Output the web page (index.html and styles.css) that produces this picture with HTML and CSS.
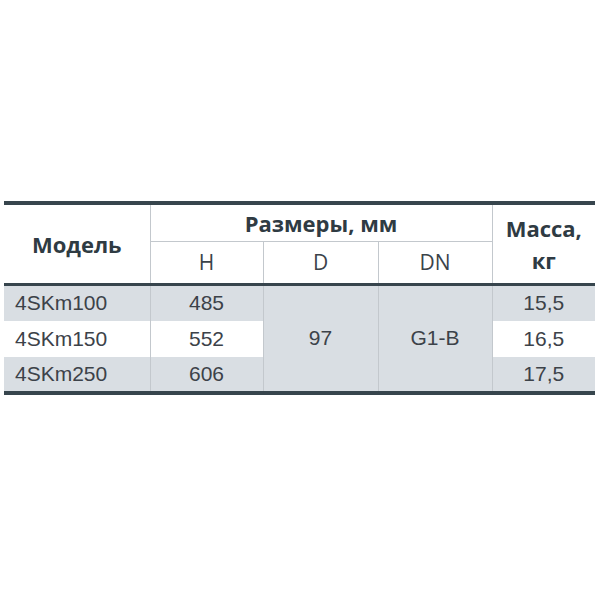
FILE: index.html
```html
<!DOCTYPE html>
<html>
<head>
<meta charset="utf-8">
<link rel="stylesheet" href="styles.css">
</head>
<body>
<div class="wrap">
<table class="spec">
  <colgroup>
    <col class="c-model"><col class="c-h"><col class="c-d"><col class="c-dn"><col class="c-mass">
  </colgroup>
  <thead>
    <tr class="h1">
      <th rowspan="2" class="hb">Модель</th>
      <th colspan="3" class="hb sub-line">Размеры, мм</th>
      <th rowspan="2" class="hb">Масса,<br>кг</th>
    </tr>
    <tr class="h2">
      <th class="hl">H</th>
      <th class="hl">D</th>
      <th class="hl">DN</th>
    </tr>
  </thead>
  <tbody>
    <tr class="g r1">
      <td class="model">4SKm100</td>
      <td>485</td>
      <td rowspan="3" class="merged">97</td>
      <td rowspan="3" class="merged">G1-B</td>
      <td>15,5</td>
    </tr>
    <tr class="w r2">
      <td class="model">4SKm150</td>
      <td>552</td>
      <td>16,5</td>
    </tr>
    <tr class="g r3">
      <td class="model">4SKm250</td>
      <td>606</td>
      <td>17,5</td>
    </tr>
  </tbody>
</table>
</div>
</body>
</html>
```
FILE: styles.css
```css
html, body {
  margin: 0;
  padding: 0;
  background: #ffffff;
}
.wrap {
  padding: 201px 5px 0 4px;
}
.spec {
  width: 591px;
  border-collapse: collapse;
  table-layout: fixed;
  border-top: 4px solid #37454d;
  border-bottom: 4px solid #37454d;
  color: #3b434a;
}
.c-model { width: 146px; }
.c-h { width: 113px; }
.c-d { width: 115px; }
.c-dn { width: 114px; }
.c-mass { width: 103px; }
th, td {
  padding: 0;
  border-left: 1px solid #c3c8cd;
  border-right: 1px solid #c3c8cd;
  text-align: center;
  vertical-align: middle;
}
th:first-child, td:first-child { border-left: none; }
tr > :last-child { border-right: none; }
.h1 th:last-child { border-right: none; }
.h1 { height: 38px; }
.h2 { height: 43px; }
thead { border-bottom: 3px solid #37454d; }
.hb {
  font-family: "Open Sans", "DejaVu Sans", sans-serif;
  font-weight: 700;
  font-size: 22px;
  color: #2f3b43;
  line-height: 32px;
}
.sub-line { border-bottom: 1px solid #c3c8cd; }
.hl {
  font-family: "Open Sans", "Liberation Sans", sans-serif;
  font-weight: 400;
  font-size: 21px;
  color: #3b434a;
}
td {
  font-family: "Liberation Sans", Arial, sans-serif;
  font-size: 21px;
  color: #3c4249;
}
.r1 td { height: 35px; }
.r2 td { height: 36px; }
.r3 td { height: 34px; }
tr.g td { background: #d9dee3; }
tr.w td { background: #ffffff; }
td.merged { background: #d9dee3 !important; }
td.model {
  text-align: left;
  padding-left: 11px;
}
```
